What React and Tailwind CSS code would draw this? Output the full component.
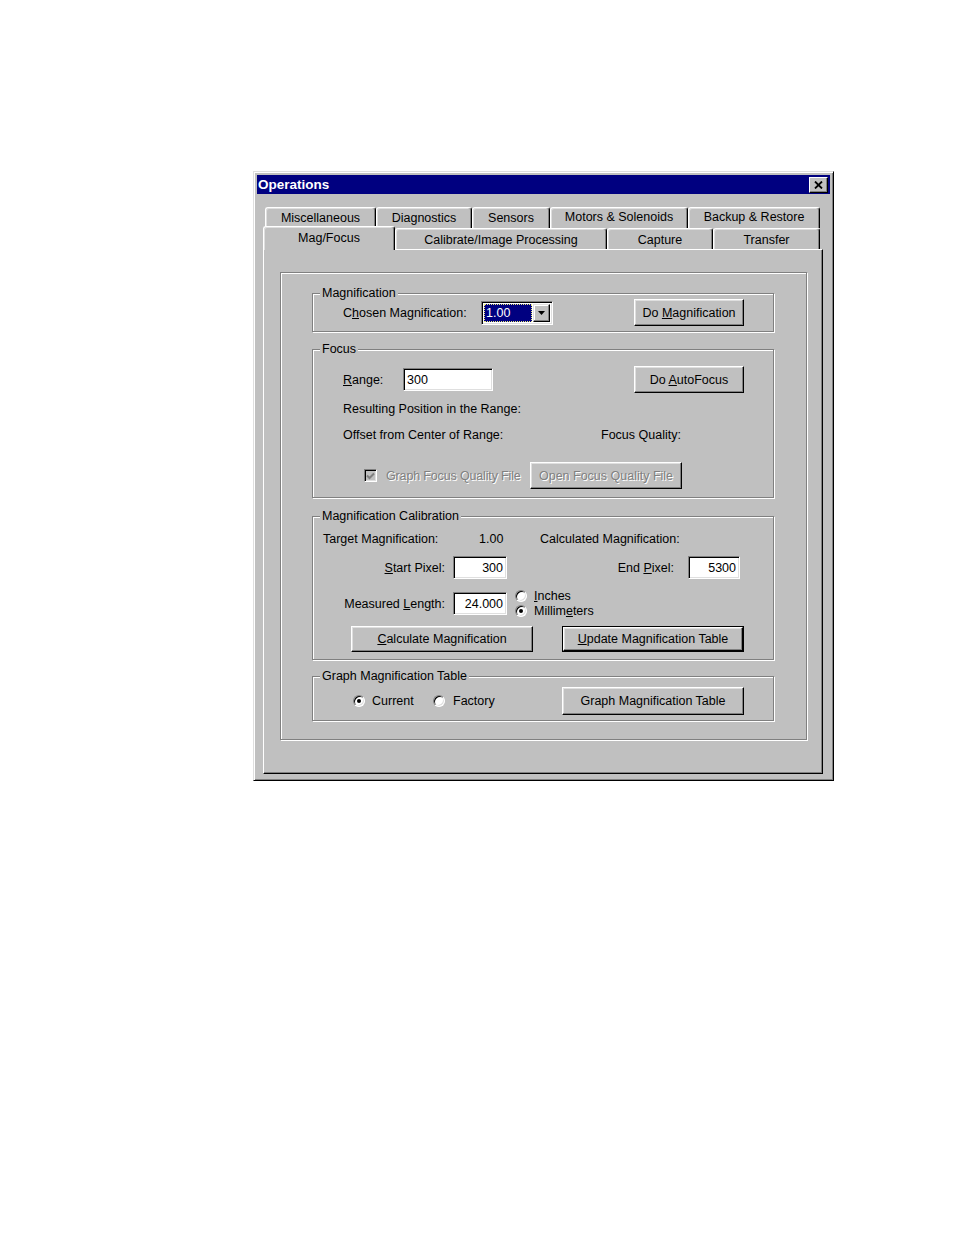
import React from 'react';

const Btn = ({ children, className = '', disabled = false }) => (
  <div
    className={`flex items-center justify-center bg-[#c0c0c0] border border-t-white border-l-white border-r-black border-b-black shadow-[inset_-1px_-1px_0_#808080,inset_1px_1px_0_#dfdfdf] ${
      disabled ? 'text-[#808080] [text-shadow:1px_1px_0_#fff]' : ''
    } ${className}`}
  >
    <span>{children}</span>
  </div>
);

const Field = ({ children, className = '' }) => (
  <div
    className={`flex items-center bg-white border border-t-[#808080] border-l-[#808080] border-r-white border-b-white shadow-[inset_1px_1px_0_#000,inset_-1px_-1px_0_#dfdfdf] px-[3px] ${className}`}
  >
    {children}
  </div>
);

const Radio = ({ checked }) => (
  <span className="flex items-center justify-center w-[12px] h-[12px] shrink-0 rounded-full bg-white border border-t-[#808080] border-l-[#808080] border-r-white border-b-white shadow-[inset_1px_1px_0_#000,inset_-1px_-1px_0_#dfdfdf]">
    {checked && <span className="w-[4px] h-[4px] rounded-full bg-black" />}
  </span>
);

const Group = ({ title, className = '', children }) => (
  <div className={`relative border border-[#808080] shadow-[1px_1px_0_#fff,inset_1px_1px_0_#fff] ${className}`}>
    <span className="absolute -top-[9px] left-[7px] px-[2px] bg-[#c0c0c0] leading-[16px]">{title}</span>
    {children}
  </div>
);

const Tab = ({ label, className = '' }) => (
  <div
    className={`flex items-center justify-center h-full border-t border-l border-r border-t-white border-l-white border-r-black rounded-t-[3px] shadow-[inset_-1px_0_0_#808080,inset_1px_1px_0_#dfdfdf] ${className}`}
  >
    {label}
  </div>
);

export default function App() {
  return (
    <div className="min-h-[1235px] bg-white pt-[171px] pl-[253px] font-['Liberation_Sans',Arial,sans-serif] text-[12.5px] leading-[16px] text-black">
      {/* window */}
      <div className="w-[581px] bg-[#c0c0c0] border border-t-[#dfdfdf] border-l-[#dfdfdf] border-r-black border-b-black shadow-[inset_1px_1px_0_#fff,inset_-1px_-1px_0_#808080] p-[3px] pb-[6px]">
        {/* title bar */}
        <div className="flex items-center justify-between h-[19px] bg-[#000080] pl-[1px] pr-[2px]">
          <span className="text-white font-bold text-[13.5px]">Operations</span>
          <div className="flex items-center justify-center w-[19px] h-[16px] bg-[#c0c0c0] border border-t-white border-l-white border-r-black border-b-black shadow-[inset_-1px_-1px_0_#808080]">
            <svg width="9" height="8" viewBox="0 0 9 8">
              <path d="M1 0.5 L8 7.5 M8 0.5 L1 7.5" stroke="#000" strokeWidth="1.8" />
            </svg>
          </div>
        </div>

        {/* tabs */}
        <div className="mt-[13px] ml-[6px] w-[560px]">
          <div className="flex h-[21px] ml-[2px]">
            <Tab label="Miscellaneous" className="w-[111px]" />
            <Tab label="Diagnostics" className="w-[96px]" />
            <Tab label="Sensors" className="w-[78px]" />
            <Tab label="Motors & Solenoids" className="w-[138px] pb-[2px]" />
            <Tab label="Backup & Restore" className="w-[132px] pb-[2px]" />
          </div>
          <div className="flex items-end h-[21px]">
            <div className="relative z-10 w-[132px] h-[24px] -mb-[1px] bg-[#c0c0c0] flex items-center justify-center pb-[2px] border-t border-l border-r border-t-white border-l-white border-r-black rounded-t-[3px] shadow-[inset_-1px_0_0_#808080,inset_1px_1px_0_#dfdfdf]">
              Mag/Focus
            </div>
            <Tab label="Calibrate/Image Processing" className="w-[212px] pt-[2px]" />
            <Tab label="Capture" className="w-[106px] pt-[2px]" />
            <Tab label="Transfer" className="w-[107px] pt-[2px]" />
          </div>

          {/* panel */}
          <div className="h-[525px] border border-t-white border-l-white border-r-black border-b-black shadow-[inset_-1px_-1px_0_#808080] pt-[22px] pl-[16px]">
            <div className="w-[527px] h-[468px] border border-[#808080] shadow-[1px_1px_0_#fff,inset_1px_1px_0_#fff] pt-[20px] pl-[31px]">
              <div className="w-[462px] flex flex-col">
                {/* Magnification */}
                <Group title="Magnification" className="h-[39px] flex items-center pl-[30px] pr-[29px]">
                  <span className="w-[138px]">C<u>h</u>osen Magnification:</span>
                  <div className="flex items-center w-[72px] h-[24px] bg-white border border-t-[#808080] border-l-[#808080] border-r-white border-b-white shadow-[inset_1px_1px_0_#000,inset_-1px_-1px_0_#dfdfdf] p-[2px]">
                    <div className="flex items-center flex-1 h-full bg-[#000080] border border-dotted border-[#e8e878] text-white pl-[1px]">
                      1.00
                    </div>
                    <div className="flex items-center justify-center w-[17px] h-full ml-[1px] bg-[#c0c0c0] border border-t-[#dfdfdf] border-l-[#dfdfdf] border-r-black border-b-black shadow-[inset_-1px_-1px_0_#808080,inset_1px_1px_0_#fff]">
                      <svg width="7" height="4" viewBox="0 0 7 4">
                        <path d="M0 0 H7 L3.5 4 Z" fill="#000" />
                      </svg>
                    </div>
                  </div>
                  <Btn className="ml-auto w-[110px] h-[27px]">
                    Do <u>M</u>agnification
                  </Btn>
                </Group>

                {/* Focus */}
                <Group title="Focus" className="mt-[17px] h-[149px] pt-[16px] pl-[30px] pr-[29px]">
                  <div className="flex items-center h-[27px]">
                    <span className="w-[60px]">
                      <u>R</u>ange:
                    </span>
                    <Field className="w-[90px] h-[23px]">300</Field>
                    <Btn className="ml-auto w-[110px] h-[27px]">
                      Do <u>A</u>utoFocus
                    </Btn>
                  </div>
                  <div className="mt-[8px]">Resulting Position in the Range:</div>
                  <div className="mt-[10px] flex">
                    <span className="w-[258px]">Offset from Center of Range:</span>
                    <span>Focus Quality:</span>
                  </div>
                  <div className="mt-[19px] flex items-center h-[27px]">
                    <span className="ml-[21px] flex items-center justify-center w-[13px] h-[13px] bg-[#c0c0c0] border border-t-[#808080] border-l-[#808080] border-r-white border-b-white shadow-[inset_1px_1px_0_#000,inset_-1px_-1px_0_#dfdfdf]">
                      <svg width="9" height="8" viewBox="0 0 9 8">
                        <path d="M1 3.5 L3.5 6 L8 1.5" stroke="#808080" strokeWidth="2" fill="none" />
                      </svg>
                    </span>
                    <span className="ml-[9px] w-[144px] text-[#808080] [text-shadow:1px_1px_0_#fff] tracking-[-0.15px]">
                      Graph Focus Quality File
                    </span>
                    <Btn disabled className="w-[152px] h-[27px]">
                      Open Focus Quality File
                    </Btn>
                  </div>
                </Group>

                {/* Magnification Calibration */}
                <Group title="Magnification Calibration" className="mt-[18px] h-[144px] pt-[14px]">
                  <div className="flex">
                    <span className="ml-[10px] w-[156px]">Target Magnification:</span>
                    <span className="w-[61px]">1.00</span>
                    <span>Calculated Magnification:</span>
                  </div>
                  <div className="mt-[9px] flex items-center h-[23px]">
                    <span className="w-[132px] text-right">
                      <u>S</u>tart Pixel:
                    </span>
                    <Field className="ml-[8px] w-[54px] h-[23px] justify-end">300</Field>
                    <span className="w-[167px] text-right">
                      End <u>P</u>ixel:
                    </span>
                    <Field className="ml-[14px] w-[52px] h-[23px] justify-end">5300</Field>
                  </div>
                  <div className="mt-[13px] flex items-center h-[23px]">
                    <span className="w-[132px] text-right">
                      Measured <u>L</u>ength:
                    </span>
                    <Field className="ml-[8px] w-[54px] h-[23px] justify-end">24.000</Field>
                    <div className="ml-[8px] flex flex-col">
                      <div className="flex items-center h-[15px]">
                        <Radio />
                        <span className="ml-[7px]">
                          <u>I</u>nches
                        </span>
                      </div>
                      <div className="flex items-center h-[15px]">
                        <Radio checked />
                        <span className="ml-[7px]">
                          Millim<u>e</u>ters
                        </span>
                      </div>
                    </div>
                  </div>
                  <div className="mt-[11px] flex items-center">
                    <Btn className="ml-[38px] w-[182px] h-[26px]">
                      <u>C</u>alculate Magnification
                    </Btn>
                    <div className="ml-[29px] w-[182px] h-[26px] border border-black">
                      <Btn className="w-full h-full">
                        <u>U</u>pdate Magnification Table
                      </Btn>
                    </div>
                  </div>
                </Group>

                {/* Graph Magnification Table */}
                <Group title="Graph Magnification Table" className="mt-[16px] h-[45px] pt-[5px] flex items-center pr-[29px]">
                  <div className="ml-[40px] flex items-center w-[80px]">
                    <Radio checked />
                    <span className="ml-[7px]">Current</span>
                  </div>
                  <div className="flex items-center">
                    <Radio />
                    <span className="ml-[8px]">Factory</span>
                  </div>
                  <Btn className="ml-auto w-[182px] h-[28px]">Graph Magnification Table</Btn>
                </Group>
              </div>
            </div>
          </div>
        </div>
      </div>
    </div>
  );
}
